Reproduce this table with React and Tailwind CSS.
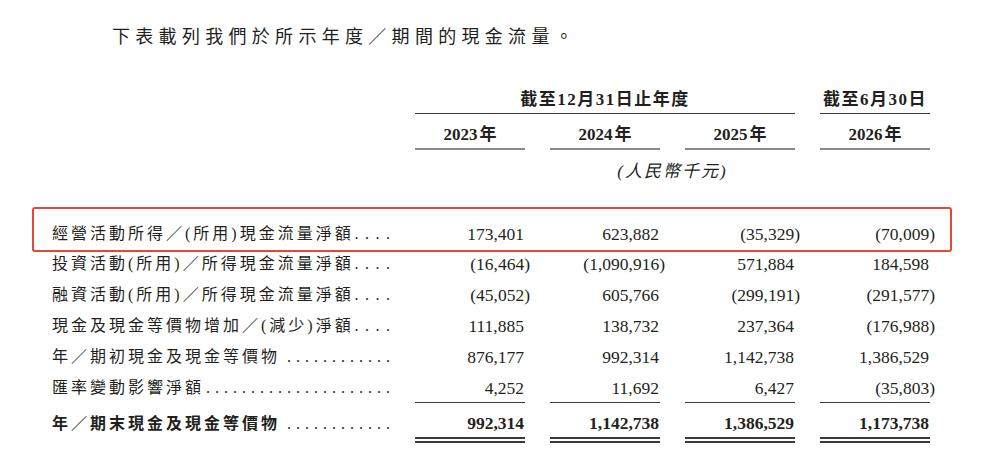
import React from "react";

const rows = [
  { label: "經營活動所得／(所用)現金流量淨額", dots: "....", wide: true, values: ["173,401", "623,882", "(35,329)", "(70,009)"] },
  { label: "投資活動(所用)／所得現金流量淨額", dots: "....", wide: true, values: ["(16,464)", "(1,090,916)", "571,884", "184,598"] },
  { label: "融資活動(所用)／所得現金流量淨額", dots: "....", wide: true, values: ["(45,052)", "605,766", "(299,191)", "(291,577)"] },
  { label: "現金及現金等價物增加／(減少)淨額", dots: "....", wide: true, values: ["111,885", "138,732", "237,364", "(176,988)"] },
  { label: "年／期初現金及現金等價物", dots: "............", values: ["876,177", "992,314", "1,142,738", "1,386,529"] },
  { label: "匯率變動影響淨額", dots: ".....................", values: ["4,252", "11,692", "6,427", "(35,803)"] },
];

const total = {
  label: "年／期末現金及現金等價物",
  dots: "............",
  values: ["992,314", "1,142,738", "1,386,529", "1,173,738"],
};

// numbers hang their closing paren past the column edge
const Num = ({ v }) => {
  if (v.startsWith("(")) {
    return (
      <span>
        {v.slice(0, -1)}
        <span className="mr-[-6px]">)</span>
      </span>
    );
  }
  return <span>{v}</span>;
};

const Label = ({ label, dots, wide, bold }) => (
  <div className="flex items-center whitespace-nowrap w-full">
    <span className={`text-[16px] tracking-[3px] ${bold ? "font-bold" : ""}`}>{label}</span>
    <span
      className={`ml-auto text-[16px] ${wide ? "tracking-[6.5px] mr-[-6.5px]" : "tracking-[5px] mr-[-5px]"}`}
    >
      {dots}
    </span>
  </div>
);

const Row = ({ row, cellClass = "", bold = false }) => (
  <div className="grid grid-cols-[338px_110px_110px_110px_110px] gap-x-[25px]">
    <div className="h-[24px] flex items-center">
      <Label label={row.label} dots={row.dots} wide={row.wide} bold={bold} />
    </div>
    {row.values.map((v, i) => (
      <div
        key={i}
        className={`h-[24px] flex items-center justify-end pr-[1px] text-[17.5px] ${bold ? "font-bold" : ""} ${cellClass}`}
      >
        <Num v={v} />
      </div>
    ))}
  </div>
);

export default function App() {
  return (
    <div className="w-[982px] h-[463px] bg-white overflow-hidden text-[#231f20] font-['Liberation_Serif','Noto_Sans_CJK_TC',serif]">
      <div className="pt-[25px] pl-[112px] h-[49px] text-[18px] leading-[24px] tracking-[5.3px]">
        下表載列我們於所示年度／期間的現金流量。
      </div>

      <div className="mt-[39px] pl-[415px] flex gap-x-[25px]">
        <div className="w-[380px] h-[26px] pb-[2px] border-b border-[#3a3a3a] flex items-center justify-center font-bold text-[17px] tracking-[1.5px]">
          截至12月31日止年度
        </div>
        <div className="w-[110px] h-[26px] pb-[2px] border-b border-[#3a3a3a] flex items-center justify-center font-bold text-[17px] tracking-[1.5px]">
          截至6月30日
        </div>
      </div>

      <div className="mt-[10px] pl-[415px] flex gap-x-[25px]">
        {["2023", "2024", "2025", "2026"].map((y) => (
          <div
            key={y}
            className="w-[110px] h-[26px] pb-[2px] border-b-2 border-[#8a8a8a] flex items-center justify-center font-bold text-[17px]"
          >
            {y}
            <span className="ml-[2px]">年</span>
          </div>
        ))}
      </div>

      <div className="mt-[10px] pl-[415px]">
        <div className="w-[515px] h-[24px] flex items-center justify-center italic text-[17px] tracking-[2px]">
          (人民幣千元)
        </div>
      </div>

      <div className="mt-[23px] ml-[32px] w-[920px] border-2 border-[#e8453c] rounded-[3px] pl-[18px] pr-[20px] pt-[13px] pb-[4px]">
        <Row row={rows[0]} />
      </div>

      <div className="pl-[52px] flex flex-col gap-y-[7px]">
        {rows.slice(1, 5).map((r, i) => (
          <Row key={i} row={r} />
        ))}
        <div className="h-[26.5px]">
          <Row row={rows[5]} cellClass="border-b-[1.5px] border-[#3a3a3a] box-content pb-[2px]" />
        </div>
      </div>

      <div className="pl-[52px] mt-[9px]">
        <Row
          row={total}
          bold
          cellClass="border-b-[6px] border-double border-[#3a3a3a] box-content pb-[1px]"
        />
      </div>
    </div>
  );
}
